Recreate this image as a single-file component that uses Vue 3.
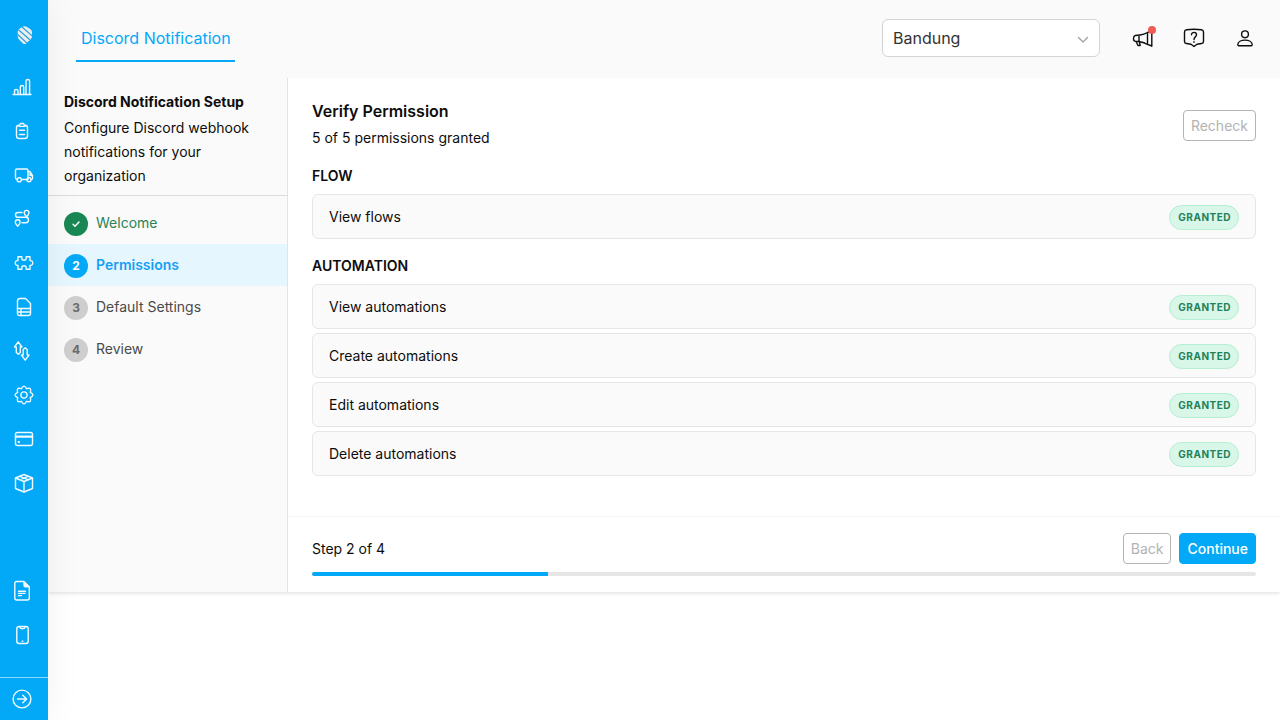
<template>
  <div class="app">
    <nav class="sidebar" aria-label="Main">
      <a class="logo" href="#" aria-label="Home">
        <svg viewBox="0 0 48 65">
          <defs>
            <clipPath id="logo-shape">
              <path d="M22 27q2.500-1.500 5 0l3.500 2.300q1.500 1 1.500 3v4q0 2-1.500 3.300L26 43.500q-1.500 1-3 0l-4-4q-1.300-1.500-1.300-3.500v-4q0-2 1.500-3z" />
            </clipPath>
          </defs>
          <g clip-path="url(#logo-shape)">
            <path class="logo-fill" d="M16 25h18v20H16z" />
            <path class="logo-cut" d="M16 33 29 45M17 28.500 33 42.500M21.500 26.500 34 37.500" />
          </g>
        </svg>
      </a>
      <ul class="nav-list">
        <li v-for="item in mainNav" :key="item.name">
          <a class="nav-link" href="#" :aria-label="item.name">
            <svg viewBox="0 0 48 44"><path v-for="d in item.paths" :key="d" :d="d" /></svg>
          </a>
        </li>
      </ul>
      <ul class="nav-list nav-bottom">
        <li v-for="item in bottomNav" :key="item.name">
          <a class="nav-link" href="#" :aria-label="item.name">
            <svg viewBox="0 0 48 44"><path v-for="d in item.paths" :key="d" :d="d" /></svg>
          </a>
        </li>
      </ul>
      <button class="nav-expand" type="button" aria-label="Expand menu">
        <svg viewBox="0 0 48 42">
          <circle cx="22" cy="21" r="8.900" />
          <path d="M17.500 21h9M22.800 17.200l3.800 3.800-3.800 3.800" />
        </svg>
      </button>
    </nav>

    <div class="page">
      <header class="topbar">
        <a class="tab" href="#">Discord Notification</a>
        <div class="topbar-right">
          <div class="select-wrap">
            <select v-model="organization" class="org-select" aria-label="Organization">
              <option>Bandung</option>
            </select>
            <svg class="chevron" viewBox="0 0 12 8"><path d="M1.500 1.500 6 6l4.500-4.500" /></svg>
          </div>
          <div class="topbar-actions">
            <button class="icon-btn" type="button" aria-label="Announcements">
              <svg viewBox="0 0 24 24">
                <path d="M4.200 9.500 9 9q4-.5 7.500-2.500v12Q13 16.300 9 15.700l-4.800-.5q-1.700-.3-1.700-2.800t1.700-2.900zM8 9.300v6.200M20.800 5.500v14.700M16.500 6.700l1-.6M16.500 18.300l4.300 1.700M5 15.500l2 4h2.200l-.8-3.600" />
              </svg>
              <span class="dot"></span>
            </button>
            <button class="icon-btn" type="button" aria-label="Help">
              <svg viewBox="0 0 24 24">
                <path d="M4.500 3.700Q12 2.700 19.500 3.700Q21.500 4 21.500 6v9.500q0 1.800-2 2l-4.500.7-3 2.300-3-2.300-4.500-.7q-2-.2-2-2V6q0-2 2-2.300z" />
                <path d="M9.500 8.800c0-3.300 5-3.200 5 0 0 2.200-2.500 2-2.500 4.700M12 15.800v.4" />
              </svg>
            </button>
            <button class="icon-btn" type="button" aria-label="Account">
              <svg viewBox="0 0 24 24">
                <circle cx="12" cy="8.300" r="3.400" />
                <path d="M4.800 18.800c0-6.200 14.400-6.200 14.400 0q0 .9-.9.900H5.700q-.9 0-.9-.9z" />
              </svg>
            </button>
          </div>
        </div>
      </header>

      <main class="wizard">
        <aside class="setup">
          <div class="setup-head">
            <h2>Discord Notification Setup</h2>
            <p>Configure Discord webhook notifications for your organization</p>
          </div>
          <ol class="steps">
            <li v-for="(step, index) in steps" :key="step.label" class="step" :class="step.state">
              <span class="step-mark">
                <svg v-if="step.state === 'is-done'" viewBox="0 0 8 8"><path d="M1 4.200 3 6.200 7 2" /></svg>
                <template v-else>{{ index + 1 }}</template>
              </span>
              <span class="step-label">{{ step.label }}</span>
            </li>
          </ol>
        </aside>

        <section class="content">
          <div class="content-body">
            <div class="content-head">
              <div class="content-title">
                <h1>Verify Permission</h1>
                <p>{{ grantedCount }} of {{ permissions.length }} permissions granted</p>
              </div>
              <button class="btn btn-outline" type="button" disabled>Recheck</button>
            </div>

            <div class="groups">
              <div v-for="group in groups" :key="group.name">
                <h3>{{ group.name }}</h3>
                <ul class="permission-list">
                  <li v-for="permission in group.permissions" :key="permission.label" class="permission">
                    <span>{{ permission.label }}</span>
                    <span v-if="permission.granted" class="badge">GRANTED</span>
                  </li>
                </ul>
              </div>
            </div>
          </div>

          <footer class="content-foot">
            <div class="foot-row">
              <span>Step {{ currentStep }} of {{ steps.length }}</span>
              <div class="foot-actions">
                <button class="btn btn-outline" type="button" disabled>Back</button>
                <button class="btn btn-primary" type="button">Continue</button>
              </div>
            </div>
            <div class="progress">
              <div class="progress-bar" :style="{ width: progress + '%' }"></div>
            </div>
          </footer>
        </section>
      </main>
    </div>
  </div>
</template>

<script setup>
import { computed, ref } from 'vue'

const organization = ref('Bandung')
const currentStep = ref(2)

const steps = [
  { label: 'Welcome', state: 'is-done' },
  { label: 'Permissions', state: 'is-active' },
  { label: 'Default Settings', state: '' },
  { label: 'Review', state: '' }
]

const groups = [
  { name: 'FLOW', permissions: [{ label: 'View flows', granted: true }] },
  {
    name: 'AUTOMATION',
    permissions: [
      { label: 'View automations', granted: true },
      { label: 'Create automations', granted: true },
      { label: 'Edit automations', granted: true },
      { label: 'Delete automations', granted: true }
    ]
  }
]

const permissions = computed(() => groups.flatMap((group) => group.permissions))
const grantedCount = computed(() => permissions.value.filter((permission) => permission.granted).length)
// the bar counts completed steps only
const progress = computed(() => ((currentStep.value - 1) / steps.length) * 100)

const mainNav = [
  {
    name: 'Analytics',
    paths: ['M13 29.500h18', 'M14.500 29.500V26q0-1.500 1.700-1.500T18 26v3.500', 'M20.300 29.500V22q0-1.500 1.700-1.500t1.700 1.500v7.500', 'M26 29.500V16q0-1.500 1.800-1.500t1.800 1.500v13.500']
  },
  {
    name: 'Orders',
    paths: ['M19 16.200q-2.500 0-2.500 2.300v8.200q0 2.800 2.800 2.800h5.400q2.800 0 2.800-2.800v-8.200q0-2.300-2.500-2.300', 'M20.500 14.500h3l1.500 2.900h-6z', 'M19.500 21.300h5M19.500 25.500h5']
  },
  {
    name: 'Deliveries',
    paths: ['M17 26.500q-1.500-.3-1.500-2v-7q0-1.500 1.500-1.500h9.500q1.500 0 1.500 1.500v9h-6.500', 'M28 18.500h1.800l2.700 4v3q0 1-1.500 1', 'M17.200 26.800a2.100 2.100 0 1 0 4.200 0 2.100 2.100 0 1 0-4.200 0M27 26.800a2 2 0 1 0 4 0 2 2 0 1 0-4 0', 'M30 20.500v2h2']
  },
  {
    name: 'Routes',
    paths: ['M24.200 15.800a2.400 2.400 0 1 1 4.800 0q0 1.700-2.400 4-2.400-2.300-2.400-4z', 'M15.300 25.200a2.400 2.400 0 1 1 4.800 0q0 1.700-2.400 4-2.400-2.300-2.400-4z', 'M22 15.500h-4q-2.500 0-2.500 2.400t2.500 2.400h7.800q2.700 0 2.700 2.700t-2.700 2.700H22']
  },
  {
    name: 'Integrations',
    paths: ['M18 15.800h3.800v1.400q0 2 2.200 2t2.200-2v-1.400H30v3.800h1q1.800.3 1.800 2.400T31 24.400h-1v3.800h-3.800v-1.400q0-2-2.200-2t-2.200 2v1.400H18v-3.800h-1q-1.800-.3-1.800-2.400t1.800-2.400h1z']
  },
  {
    name: 'Files',
    paths: ['M17.500 28.500V16q0-2.500 2.500-2.500h5.500l5 5v10q0 2-2 2h-9q-2 0-2-2z', 'M17.500 23.500h13M17.500 27h13M21 23.500v7']
  },
  {
    name: 'Transfers',
    paths: ['M18.200 12.800 22 18h-1.700v5.500l-2 1.800-2-1.800V18h-1.800z', 'M25.200 31.200 21.400 26h1.800v-5.500l2-1.800 2 1.800V26H29z']
  },
  {
    name: 'Settings',
    paths: ['M21.400 15.700Q24 10.500 26.600 15.700Q32.100 13.900 30.300 19.400Q35.500 22 30.300 24.600Q32.100 30.100 26.600 28.300Q24 33.500 21.400 28.300Q15.900 30.100 17.700 24.600Q12.500 22 17.700 19.400Q15.900 13.900 21.400 15.700z', 'M20.900 22a3.100 3.100 0 1 0 6.200 0 3.100 3.100 0 1 0-6.200 0']
  },
  {
    name: 'Billing',
    paths: ['M17.500 15.500h13q2 0 2 2v9q0 2-2 2h-13q-2 0-2-2v-9q0-2 2-2z', 'M15.500 19.300h17M15.500 20h17', 'M18.300 24.600h1M18.300 25.200h1']
  },
  {
    name: 'Products',
    paths: ['M24 13.500 32.500 17v10.500L24 31l-8.500-3.500V17z', 'M15.500 17 24 20.500 32.500 17M24 20.500V31', 'M19.700 15.300 28 18.700M28 15.300l-6 2.500']
  }
]

const bottomNav = [
  {
    name: 'Documents',
    paths: ['M14.800 29V14.500q0-2 2-2h7l5.500 5.500v11q0 2-2 2H16.800q-2 0-2-2z', 'M24 12.700v3.300q0 1.800 1.800 1.800h3.200zM25 14.500v2h2z', 'M18.500 22.200h7M18.500 24.400h6.500M18.500 26.600h3']
  },
  {
    name: 'Mobile app',
    paths: ['M19 13.500h7q2.200 0 2.200 2.500v12q0 2.500-2.200 2.500h-7q-2.200 0-2.200-2.500V16q0-2.500 2.200-2.500z', 'M19.500 13.700q.5 2 3 2t3-2', 'M22.200 28.200h.6']
  }
]
</script>

<style>
body {
  margin: 0;
  background: #fff;
}
</style>

<style scoped>
.app {
  display: flex;
  min-height: 100vh;
  font-family: Inter, "Liberation Sans", sans-serif;
  font-size: 14px;
  line-height: 24px;
  color: #0d0d0d;
}

h1,
h2,
h3,
p,
ul,
ol {
  margin: 0;
  padding: 0;
  list-style: none;
}

button,
select {
  font: inherit;
}

svg {
  display: block;
  fill: none;
  stroke: currentColor;
  stroke-width: 1.4;
  stroke-linecap: round;
  stroke-linejoin: round;
}

.sidebar {
  position: sticky;
  top: 0;
  z-index: 1;
  display: flex;
  flex-direction: column;
  width: 48px;
  height: 100vh;
  flex-shrink: 0;
  background: #03a9f7;
  color: #f0faff;
  box-shadow: 0 0 36px rgba(0, 0, 0, 0.06);
}

.logo svg {
  width: 48px;
  height: 65px;
}

.logo-fill {
  fill: #e9eef1;
  stroke: none;
}

.logo-cut {
  stroke: #2f9fdb;
  stroke-width: 1.2;
}

.nav-link {
  display: block;
  color: inherit;
}

.nav-link svg {
  width: 48px;
  height: 44px;
}

.nav-bottom {
  margin-top: auto;
  padding-bottom: 20px;
}

.nav-expand {
  padding: 0;
  border: 0;
  border-top: 1px solid #8fd6f8;
  background: none;
  color: inherit;
}

.nav-expand svg {
  width: 48px;
  height: 42px;
}

.page {
  flex: 1;
  min-width: 0;
}

.topbar {
  display: flex;
  justify-content: space-between;
  align-items: flex-start;
  height: 78px;
  padding: 0 13px 0 28px;
  background: #fafafa;
}

.tab {
  padding: 26px 4px 10px 5px;
  border-bottom: 2px solid #03a9f7;
  color: #03a9f7;
  font-size: 16px;
  text-decoration: none;
}

.topbar-right {
  display: flex;
  align-items: center;
  gap: 21px;
  padding-top: 19px;
}

.select-wrap {
  position: relative;
}

.org-select {
  width: 218px;
  height: 38px;
  padding: 0 36px 0 10px;
  border: 1px solid #d4d4d4;
  border-radius: 6px;
  background: #fff;
  color: #333;
  font-size: 16px;
  appearance: none;
}

.chevron {
  position: absolute;
  top: 17px;
  right: 11px;
  width: 12px;
  height: 8px;
  color: #a3a3a3;
  pointer-events: none;
}

.topbar-actions {
  display: flex;
  gap: 7px;
}

.icon-btn {
  position: relative;
  width: 44px;
  height: 38px;
  padding: 0 10px;
  border: 0;
  background: none;
  color: #0d0d0d;
}

.icon-btn svg {
  width: 24px;
  height: 24px;
}

.dot {
  position: absolute;
  top: 7px;
  right: 9px;
  width: 8px;
  height: 8px;
  border-radius: 50%;
  background: #f05b55;
}

.wizard {
  display: flex;
  background: #fff;
  box-shadow: 0 1px 4px rgba(0, 0, 0, 0.14);
  clip-path: inset(0 0 -8px 0);
}

.setup {
  box-sizing: border-box;
  width: 240px;
  flex-shrink: 0;
  border-right: 1px solid #e3e3e3;
  background: #fafafa;
}

.setup-head {
  padding: 12px 16px 7px;
  border-bottom: 1px solid #dcdcdc;
}

.setup-head h2 {
  margin-bottom: 2px;
  font-size: 14px;
  font-weight: 700;
}

.steps {
  padding-top: 6px;
}

.step {
  display: flex;
  gap: 8px;
  padding: 10px 16px 8px;
  color: #4a4a4a;
}

.step-mark {
  display: flex;
  align-items: center;
  justify-content: center;
  width: 24px;
  height: 24px;
  border-radius: 50%;
  background: #cecece;
  color: #6b6b6b;
  font-size: 12px;
  font-weight: 700;
}

.step-mark svg {
  width: 8px;
  height: 8px;
}

.step-label {
  line-height: 22px;
}

.is-done {
  color: #2a8353;
}

.is-done .step-mark {
  background: #198754;
  color: #fff;
}

.is-active {
  background: #e6f6fe;
  color: #159ff5;
  font-weight: 600;
}

.is-active .step-mark {
  background: #03a9f7;
  color: #fff;
}

.content {
  display: flex;
  flex: 1;
  flex-direction: column;
  min-width: 0;
}

.content-body {
  padding: 21px 24px 40px;
}

.content-head {
  display: flex;
  align-items: center;
  justify-content: space-between;
  margin-bottom: 12px;
}

.content-title {
  padding-bottom: 2px;
}

.content-title h1 {
  margin-bottom: 3px;
  font-size: 16px;
  font-weight: 600;
}

.groups {
  display: flex;
  flex-direction: column;
  gap: 15px;
}

.groups h3 {
  margin-bottom: 6px;
  font-size: 14px;
  font-weight: 600;
}

.permission-list {
  display: flex;
  flex-direction: column;
  gap: 4px;
}

.permission {
  display: flex;
  align-items: flex-start;
  justify-content: space-between;
  padding: 10px 16px 8px;
  border: 1px solid #e6e6e6;
  border-radius: 6px;
  background: #fafafa;
}

.badge {
  padding: 0 7px 0 8px;
  border: 1px solid #b5efd3;
  border-radius: 13px;
  background: #d8f7e8;
  color: #23815a;
  font-size: 10px;
  font-weight: 700;
  line-height: 23px;
  letter-spacing: 0.5px;
}

.btn {
  height: 31px;
  padding: 0 7px;
  border: 1px solid #b3b3b3;
  border-radius: 4px;
  background: #fff;
}

.btn-outline {
  color: #b3b3b3;
}

.btn-primary {
  border-color: #03a9f7;
  background: #03a9f7;
  color: #fff;
  font-weight: 500;
}

.content-foot {
  padding: 16px 24px;
  border-top: 1px solid #f5f5f5;
}

.foot-row {
  display: flex;
  align-items: center;
  justify-content: space-between;
}

.foot-actions {
  display: flex;
  gap: 8px;
}

.progress {
  height: 4px;
  margin-top: 8px;
  overflow: hidden;
  border-radius: 2px;
  background: #e6e6e6;
}

.progress-bar {
  height: 100%;
  background: #03a9f7;
}
</style>
